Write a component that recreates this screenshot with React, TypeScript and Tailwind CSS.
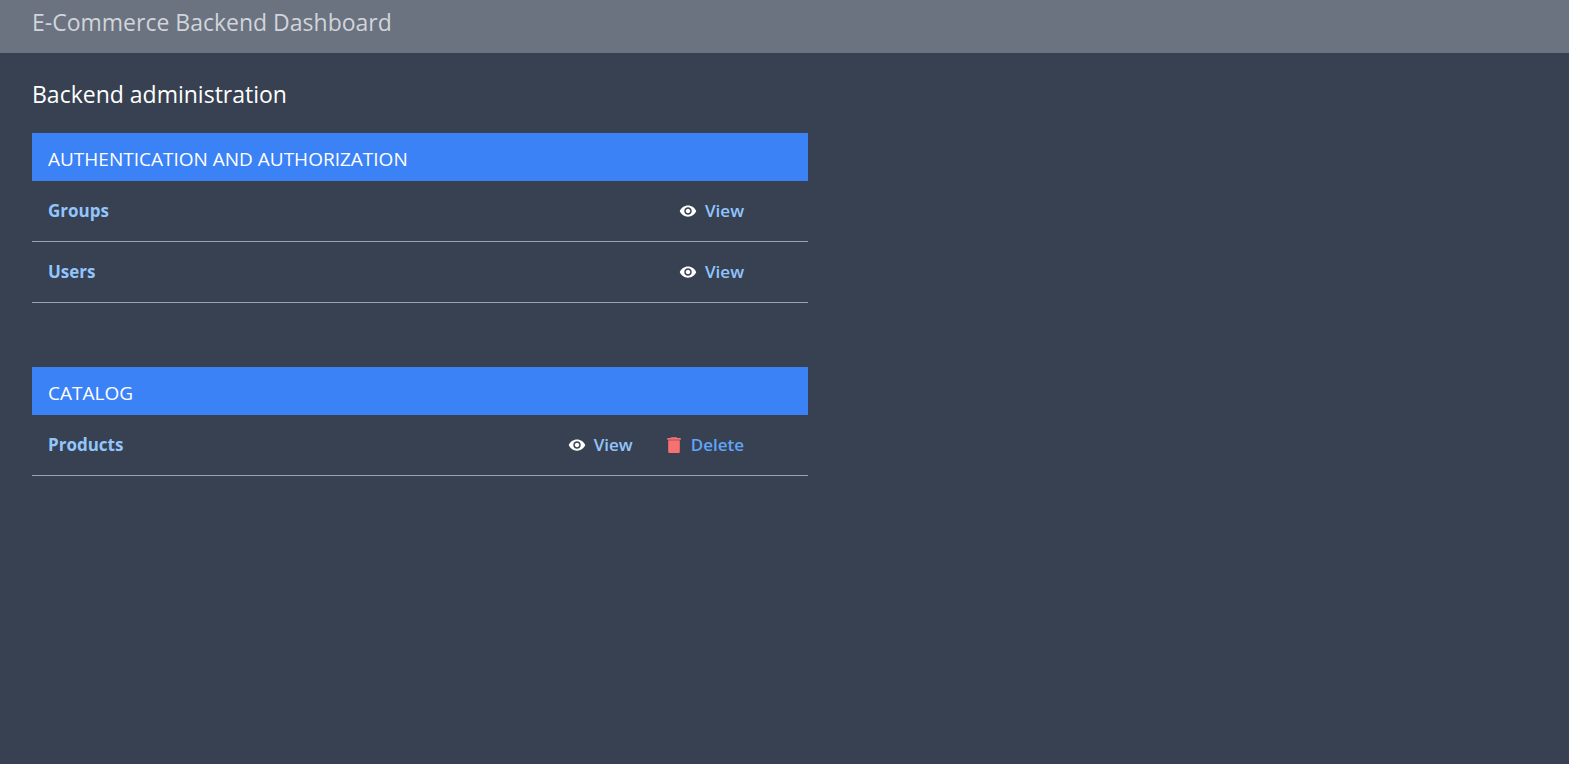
import React from "react";
import { MdVisibility } from "react-icons/md";

type Action = "view" | "delete";

interface Model {
  name: string;
  actions: Action[];
}

interface AppGroup {
  title: string;
  models: Model[];
}

const groups: AppGroup[] = [
  {
    title: "Authentication and Authorization",
    models: [
      { name: "Groups", actions: ["view"] },
      { name: "Users", actions: ["view"] },
    ],
  },
  {
    title: "Catalog",
    models: [{ name: "Products", actions: ["view", "delete"] }],
  },
];

function TrashIcon() {
  return (
    <svg viewBox="0 0 18 18" className="size-[18px] text-[#f87171]" fill="currentColor" aria-hidden="true">
      <path d="M6.400 1.300h5.200l.7.800H15.500a.3.3 0 0 1 .3.300v1.300H2.200V2.400a.3.3 0 0 1 .3-.3h3.200z" />
      <path d="M3.200 4.200h11.600V15.700a1.300 1.300 0 0 1-1.300 1.300H4.500a1.300 1.300 0 0 1-1.300-1.300z" />
    </svg>
  );
}

function ActionLink({ action }: { action: Action }) {
  if (action === "delete") {
    return (
      <a href="#delete" className="flex items-center gap-2 text-[#60a5fa]">
        <TrashIcon />
        <span>Delete</span>
      </a>
    );
  }
  return (
    <a href="#view" className="flex items-center gap-2 text-[#93c5fd]">
      <MdVisibility className="size-[18px] text-white" aria-hidden="true" />
      <span>View</span>
    </a>
  );
}

function GroupTable({ group }: { group: AppGroup }) {
  return (
    <table className="w-full border-separate border-spacing-0">
      <thead>
        <tr className="h-12 bg-[#3b82f6]">
          <th colSpan={2} scope="colgroup" className="px-4 pt-1 text-left text-[19px] leading-7 font-normal text-white uppercase">
            {group.title}
          </th>
        </tr>
      </thead>
      <tbody>
        {group.models.map((model) => (
          <tr key={model.name} className="h-[61px] text-[17px] leading-7">
            <th scope="row" className="border-b border-[#9ca3af] px-4 text-left font-bold">
              <a href={`#${model.name.toLowerCase()}`} className="block text-[#93c5fd]">
                {model.name}
              </a>
            </th>
            <td className="border-b border-[#9ca3af] pr-16 font-semibold">
              <div className="flex justify-end gap-8">
                {model.actions.map((action) => (
                  <ActionLink key={action} action={action} />
                ))}
              </div>
            </td>
          </tr>
        ))}
      </tbody>
    </table>
  );
}

export default function App() {
  return (
    <div className="min-h-screen bg-[#374151] font-['Open_Sans','Noto_Sans',sans-serif]">
      <header className="h-[53px] bg-[#6b7280] px-8 pt-1.5">
        <div className="text-[23px] leading-8 text-[#d1d5db]">E-Commerce Backend Dashboard</div>
      </header>
      <main className="pt-6 pr-px pl-4">
        <h1 className="ml-4 text-[23px] leading-[34px] text-white">Backend administration</h1>
        <div className="mt-[22px] ml-4 flex w-1/2 flex-col gap-16">
          {groups.map((group) => (
            <GroupTable key={group.title} group={group} />
          ))}
        </div>
      </main>
    </div>
  );
}
